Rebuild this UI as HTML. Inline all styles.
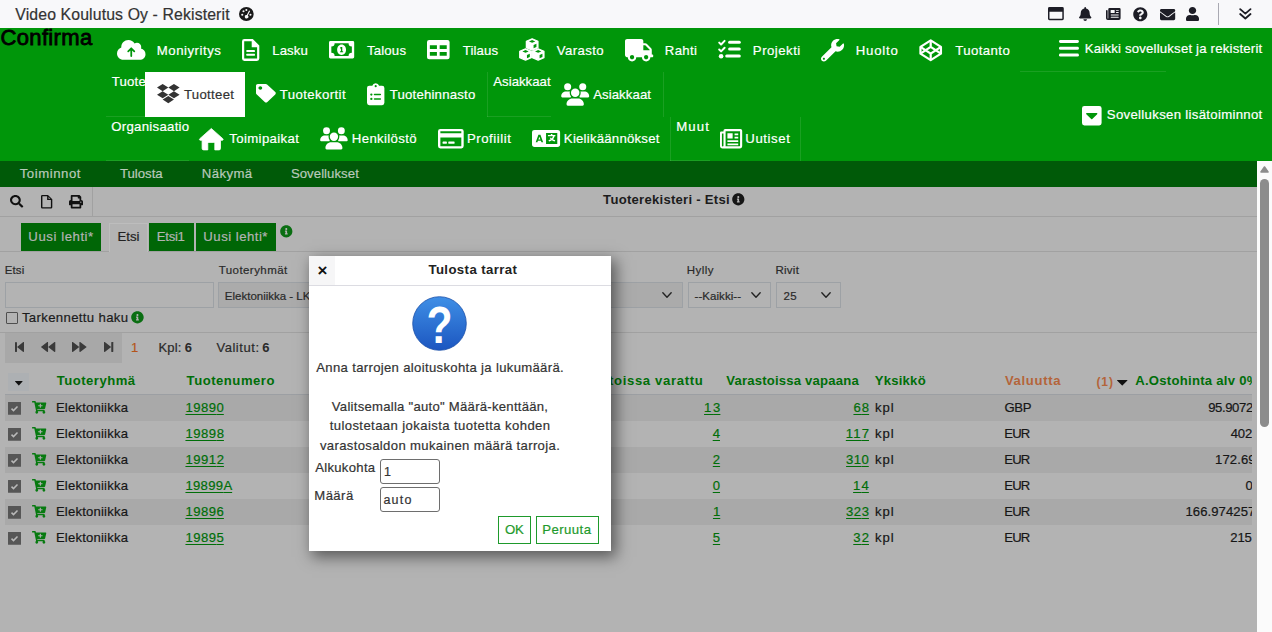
<!DOCTYPE html>
<html lang="fi"><head><meta charset="utf-8"><title>Video Koulutus Oy - Rekisterit</title>
<style>
html,body{margin:0;padding:0}
body{width:1272px;height:632px;position:relative;overflow:hidden;background:#b3b3b3;font-family:"Liberation Sans", sans-serif}
.t{position:absolute;white-space:pre;-webkit-text-stroke:.2px}
.i{position:absolute;display:block;overflow:visible}
.b{position:absolute;box-sizing:border-box}
</style></head>
<body>
<div class="b" style="left:0.0px;top:0.0px;width:1272.0px;height:28.0px;background:#f8f8fa"></div>
<div class="b" style="left:1218.0px;top:3.0px;width:1.0px;height:22.0px;background:#a9a9b2"></div>
<div class="b" style="left:0.0px;top:28.0px;width:1272.0px;height:133.0px;background:#00960a"></div>
<div class="b" style="left:1020.0px;top:70.5px;width:146.0px;height:1.0px;background:rgba(255,255,255,.10)"></div>
<div class="b" style="left:144.8px;top:71.8px;width:100.1px;height:45.1px;background:#fff"></div>
<div class="b" style="left:106.0px;top:116.0px;width:39.0px;height:1.0px;background:rgba(255,255,255,.10)"></div>
<div class="b" style="left:487.0px;top:72.0px;width:1.0px;height:45.0px;background:rgba(255,255,255,.10)"></div>
<div class="b" style="left:487.0px;top:116.0px;width:64.0px;height:1.0px;background:rgba(255,255,255,.10)"></div>
<div class="b" style="left:662.5px;top:72.0px;width:1.0px;height:45.0px;background:rgba(255,255,255,.10)"></div>
<div class="b" style="left:670.3px;top:117.0px;width:1.0px;height:44.0px;background:rgba(255,255,255,.10)"></div>
<div class="b" style="left:800.2px;top:117.0px;width:1.0px;height:44.0px;background:rgba(255,255,255,.10)"></div>
<div class="b" style="left:106.0px;top:160.0px;width:83.0px;height:1.0px;background:rgba(255,255,255,.10)"></div>
<div class="b" style="left:670.3px;top:160.0px;width:39.7px;height:1.0px;background:rgba(255,255,255,.10)"></div>
<div class="b" style="left:0.0px;top:161.0px;width:1257.0px;height:26.0px;background:#005a08"></div>
<div class="b" style="left:1257.0px;top:161.0px;width:15.0px;height:471.0px;background:#fbfbfb"></div>
<div class="b" style="left:1260.0px;top:178.7px;width:9.0px;height:248.3px;background:#8c8c8c;border-radius:4.5px"></div>
<svg class="i" style="left:1260px;top:165.800px;width:9px;height:7px" viewBox="0 0 9 7"><path d="M4.500 1L8 6H1z" fill="#8c8c8c" stroke="#8c8c8c" stroke-width="1.600" stroke-linejoin="round"/></svg>
<div class="b" style="left:92.0px;top:187.0px;width:1.0px;height:29.0px;background:#a1a1a1"></div>
<div class="b" style="left:0.0px;top:216.0px;width:1257.0px;height:1.0px;background:#a1a1a1"></div>
<div class="b" style="left:0.0px;top:251.0px;width:1257.0px;height:1.0px;background:#a1a1a1"></div>
<div class="b" style="left:0.0px;top:332.0px;width:1257.0px;height:1.0px;background:#a1a1a1"></div>
<div class="b" style="left:20.9px;top:223.0px;width:80.1px;height:28.0px;background:#006606"></div>
<div class="b" style="left:109.3px;top:222.5px;width:38.6px;height:29.5px;background:#b3b3b3;border:1px solid #bdbdbd;border-bottom:none"></div>
<div class="b" style="left:149.2px;top:223.0px;width:44.5px;height:28.0px;background:#006606"></div>
<div class="b" style="left:196.0px;top:223.0px;width:80.1px;height:28.0px;background:#006606"></div>
<div class="b" style="left:5.0px;top:282.0px;width:208.7px;height:26.0px;border:1px solid #9da1a5;background:#b3b3b3"></div>
<div class="b" style="left:218.3px;top:282.0px;width:464.7px;height:26.0px;border:1px solid #9da1a5;background:#ababab"></div>
<div class="b" style="left:688.4px;top:282.0px;width:82.6px;height:26.0px;border:1px solid #9da1a5;background:#b3b3b3"></div>
<div class="b" style="left:776.1px;top:282.0px;width:65.2px;height:26.0px;border:1px solid #9da1a5;background:#b3b3b3"></div>
<div class="b" style="left:5.6px;top:311.8px;width:12.0px;height:12.0px;border:1px solid #4f4f4f;background:#b3b3b3;border-radius:1px"></div>
<div class="b" style="left:5.0px;top:333.4px;width:117.0px;height:29.3px;background:#a8a8a8"></div>
<div class="b" style="left:8.3px;top:372.6px;width:20.6px;height:18.0px;background:#adb0b3"></div>
<div class="b" style="left:5.0px;top:394.0px;width:1247.0px;height:1.0px;background:#9c9fa3"></div>
<div class="b" style="left:5.0px;top:395.0px;width:1252.0px;height:26.0px;background:#a9a9a9"></div>
<div class="b" style="left:5.0px;top:447.0px;width:1252.0px;height:26.0px;background:#a9a9a9"></div>
<div class="b" style="left:5.0px;top:499.0px;width:1252.0px;height:26.0px;background:#a9a9a9"></div>
<span class="t" style="left:15.33px;top:6.63px;font-size:15.8px;line-height:15.8px;color:#333;letter-spacing:0.130px;">Video Koulutus Oy - Rekisterit</span>
<span class="t" style="left:0.52px;top:27.38px;font-size:22px;line-height:22px;color:#000;letter-spacing:0.341px;-webkit-text-stroke:.8px #000;">Confirma</span>
<span class="t" style="left:156.76px;top:43.83px;font-size:13.2px;line-height:13.2px;color:#fff;letter-spacing:0.529px;">Moniyritys</span>
<span class="t" style="left:272.27px;top:43.83px;font-size:13.2px;line-height:13.2px;color:#fff;letter-spacing:0.086px;">Lasku</span>
<span class="t" style="left:366.88px;top:43.83px;font-size:13.2px;line-height:13.2px;color:#fff;letter-spacing:0.202px;">Talous</span>
<span class="t" style="left:462.74px;top:43.83px;font-size:13.2px;line-height:13.2px;color:#fff;letter-spacing:0.127px;">Tilaus</span>
<span class="t" style="left:556.80px;top:43.83px;font-size:13.2px;line-height:13.2px;color:#fff;letter-spacing:0.405px;">Varasto</span>
<span class="t" style="left:664.87px;top:43.83px;font-size:13.2px;line-height:13.2px;color:#fff;letter-spacing:0.316px;">Rahti</span>
<span class="t" style="left:752.87px;top:43.83px;font-size:13.2px;line-height:13.2px;color:#fff;letter-spacing:0.492px;">Projekti</span>
<span class="t" style="left:855.76px;top:43.83px;font-size:13.2px;line-height:13.2px;color:#fff;letter-spacing:0.771px;">Huolto</span>
<span class="t" style="left:955.27px;top:43.83px;font-size:13.2px;line-height:13.2px;color:#fff;letter-spacing:0.422px;">Tuotanto</span>
<span class="t" style="left:1084.76px;top:41.83px;font-size:13.2px;line-height:13.2px;color:#fff;letter-spacing:0.191px;">Kaikki sovellukset ja rekisterit</span>
<span class="t" style="left:1106.85px;top:107.83px;font-size:13.2px;line-height:13.2px;color:#fff;letter-spacing:0.305px;">Sovelluksen lisätoiminnot</span>
<span class="t" style="left:111.75px;top:74.83px;font-size:13.2px;line-height:13.2px;color:#fff;letter-spacing:0.190px;">Tuote</span>
<span class="t" style="left:183.88px;top:87.83px;font-size:13.2px;line-height:13.2px;color:#333;letter-spacing:0.318px;">Tuotteet</span>
<span class="t" style="left:279.76px;top:87.83px;font-size:13.2px;line-height:13.2px;color:#fff;letter-spacing:0.402px;">Tuotekortit</span>
<span class="t" style="left:389.64px;top:87.83px;font-size:13.2px;line-height:13.2px;color:#fff;letter-spacing:0.213px;">Tuotehinnasto</span>
<span class="t" style="left:493.27px;top:74.83px;font-size:13.2px;line-height:13.2px;color:#fff;letter-spacing:0.019px;">Asiakkaat</span>
<span class="t" style="left:593.14px;top:87.83px;font-size:13.2px;line-height:13.2px;color:#fff;letter-spacing:0.086px;">Asiakkaat</span>
<span class="t" style="left:111.28px;top:119.83px;font-size:13.2px;line-height:13.2px;color:#fff;letter-spacing:0.281px;">Organisaatio</span>
<span class="t" style="left:229.27px;top:131.83px;font-size:13.2px;line-height:13.2px;color:#fff;letter-spacing:0.372px;">Toimipaikat</span>
<span class="t" style="left:351.87px;top:131.83px;font-size:13.2px;line-height:13.2px;color:#fff;letter-spacing:0.349px;">Henkilöstö</span>
<span class="t" style="left:466.88px;top:131.83px;font-size:13.2px;line-height:13.2px;color:#fff;letter-spacing:0.552px;">Profiilit</span>
<span class="t" style="left:563.87px;top:131.83px;font-size:13.2px;line-height:13.2px;color:#fff;letter-spacing:0.224px;">Kielikäännökset</span>
<span class="t" style="left:676.27px;top:119.83px;font-size:13.2px;line-height:13.2px;color:#fff;letter-spacing:1.108px;">Muut</span>
<span class="t" style="left:745.37px;top:131.83px;font-size:13.2px;line-height:13.2px;color:#fff;letter-spacing:0.570px;">Uutiset</span>
<span class="t" style="left:19.74px;top:166.83px;font-size:13.2px;line-height:13.2px;color:#b9c9ba;letter-spacing:0.543px;">Toiminnot</span>
<span class="t" style="left:119.88px;top:166.83px;font-size:13.2px;line-height:13.2px;color:#b9c9ba;letter-spacing:0.008px;">Tulosta</span>
<span class="t" style="left:201.76px;top:166.83px;font-size:13.2px;line-height:13.2px;color:#b9c9ba;letter-spacing:0.401px;">Näkymä</span>
<span class="t" style="left:290.88px;top:166.83px;font-size:13.2px;line-height:13.2px;color:#b9c9ba;letter-spacing:0.049px;">Sovellukset</span>
<span class="t" style="left:603.10px;top:192.91px;font-size:13.1px;line-height:13.1px;color:#1c1c1c;letter-spacing:0.260px;font-weight:700;-webkit-text-stroke:0;">Tuoterekisteri - Etsi</span>
<span class="t" style="left:28.36px;top:229.83px;font-size:13.2px;line-height:13.2px;color:#b3b3b3;letter-spacing:0.550px;">Uusi lehti*</span>
<span class="t" style="left:117.47px;top:229.83px;font-size:13.2px;line-height:13.2px;color:#222;letter-spacing:0.005px;">Etsi</span>
<span class="t" style="left:156.87px;top:229.83px;font-size:13.2px;line-height:13.2px;color:#b3b3b3;letter-spacing:-0.333px;">Etsi1</span>
<span class="t" style="left:203.37px;top:229.83px;font-size:13.2px;line-height:13.2px;color:#b3b3b3;letter-spacing:0.477px;">Uusi lehti*</span>
<span class="t" style="left:4.78px;top:265.27px;font-size:11.5px;line-height:11.5px;color:#2a2a2a;letter-spacing:0.101px;">Etsi</span>
<span class="t" style="left:218.66px;top:265.27px;font-size:11.5px;line-height:11.5px;color:#2a2a2a;letter-spacing:0.447px;">Tuoteryhmät</span>
<span class="t" style="left:686.78px;top:265.27px;font-size:11.5px;line-height:11.5px;color:#2a2a2a;letter-spacing:0.433px;">Hylly</span>
<span class="t" style="left:775.38px;top:265.27px;font-size:11.5px;line-height:11.5px;color:#2a2a2a;letter-spacing:0.291px;">Rivit</span>
<span class="t" style="left:224.87px;top:291.27px;font-size:11.5px;line-height:11.5px;color:#2a2a2a;letter-spacing:-0.006px;">Elektoniikka - LKV</span>
<span class="t" style="left:694.52px;top:291.27px;font-size:11.5px;line-height:11.5px;color:#2a2a2a;letter-spacing:0.059px;">--Kaikki--</span>
<span class="t" style="left:783.54px;top:291.27px;font-size:11.5px;line-height:11.5px;color:#2a2a2a;letter-spacing:0.296px;">25</span>
<span class="t" style="left:21.88px;top:310.83px;font-size:13.2px;line-height:13.2px;color:#1c1c1c;letter-spacing:0.335px;">Tarkennettu haku</span>
<span class="t" style="left:130.99px;top:341.00px;font-size:13px;line-height:13px;color:#b4541a;letter-spacing:0.000px;">1</span>
<span class="t" style="left:158.43px;top:341.00px;font-size:13px;line-height:13px;color:#2a2a2a;letter-spacing:0.187px;">Kpl:</span>
<span class="t" style="left:184.80px;top:341.00px;font-size:13px;line-height:13px;color:#2a2a2a;letter-spacing:0.000px;font-weight:700;-webkit-text-stroke:0;">6</span>
<span class="t" style="left:216.40px;top:341.00px;font-size:13px;line-height:13px;color:#2a2a2a;letter-spacing:0.551px;">Valitut:</span>
<span class="t" style="left:262.13px;top:341.00px;font-size:13px;line-height:13px;color:#2a2a2a;letter-spacing:0.000px;font-weight:700;-webkit-text-stroke:0;">6</span>
<span class="t" style="left:56.71px;top:373.91px;font-size:13.1px;line-height:13.1px;color:#006e08;letter-spacing:0.492px;font-weight:700;-webkit-text-stroke:0;">Tuoteryhmä</span>
<span class="t" style="left:186.62px;top:373.91px;font-size:13.1px;line-height:13.1px;color:#006e08;letter-spacing:0.516px;font-weight:700;-webkit-text-stroke:0;">Tuotenumero</span>
<span class="t" style="left:570.82px;top:373.91px;font-size:13.1px;line-height:13.1px;color:#006e08;letter-spacing:0.653px;font-weight:700;-webkit-text-stroke:0;">Varastoissa varattu</span>
<span class="t" style="left:726.26px;top:373.91px;font-size:13.1px;line-height:13.1px;color:#006e08;letter-spacing:0.201px;font-weight:700;-webkit-text-stroke:0;">Varastoissa vapaana</span>
<span class="t" style="left:874.71px;top:373.91px;font-size:13.1px;line-height:13.1px;color:#006e08;letter-spacing:0.238px;font-weight:700;-webkit-text-stroke:0;">Yksikkö</span>
<span class="t" style="left:1004.92px;top:373.91px;font-size:13.1px;line-height:13.1px;color:#b4643a;letter-spacing:0.678px;font-weight:700;-webkit-text-stroke:0;">Valuutta</span>
<span class="t" style="left:1096.42px;top:375.84px;font-size:12px;line-height:12px;color:#b4643a;letter-spacing:0.924px;font-weight:700;-webkit-text-stroke:0;">(1)</span>
<span class="t" style="left:1135.21px;top:373.91px;font-size:13.1px;line-height:13.1px;color:#006e08;letter-spacing:0.266px;font-weight:700;-webkit-text-stroke:0;">A.Ostohinta alv 0%</span>
<span class="t" style="left:55.88px;top:400.91px;font-size:13.1px;line-height:13.1px;color:#161616;letter-spacing:0.197px;">Elektoniikka</span>
<span class="t" style="left:185.45px;top:400.91px;font-size:13.1px;line-height:13.1px;color:#006e08;letter-spacing:0.485px;text-decoration:underline;text-decoration-thickness:1px;text-underline-offset:1.500px;">1989<span style="letter-spacing:0">0</span></span>
<span class="t" style="left:704.06px;top:400.91px;font-size:13.1px;line-height:13.1px;color:#006e08;letter-spacing:1.757px;text-decoration:underline;text-decoration-thickness:1px;text-underline-offset:1.500px;">1<span style="letter-spacing:0">3</span></span>
<span class="t" style="left:853.44px;top:400.91px;font-size:13.1px;line-height:13.1px;color:#006e08;letter-spacing:1.120px;text-decoration:underline;text-decoration-thickness:1px;text-underline-offset:1.500px;">6<span style="letter-spacing:0">8</span></span>
<span class="t" style="left:874.94px;top:400.91px;font-size:13.1px;line-height:13.1px;color:#161616;letter-spacing:1.039px;">kpl</span>
<span class="t" style="left:1004.51px;top:400.91px;font-size:13.1px;line-height:13.1px;color:#161616;letter-spacing:-0.349px;">GBP</span>
<span class="t" style="left:55.88px;top:426.91px;font-size:13.1px;line-height:13.1px;color:#161616;letter-spacing:0.197px;">Elektoniikka</span>
<span class="t" style="left:185.45px;top:426.91px;font-size:13.1px;line-height:13.1px;color:#006e08;letter-spacing:0.512px;text-decoration:underline;text-decoration-thickness:1px;text-underline-offset:1.500px;">1989<span style="letter-spacing:0">8</span></span>
<span class="t" style="left:712.70px;top:426.91px;font-size:13.1px;line-height:13.1px;color:#006e08;letter-spacing:0.000px;text-decoration:underline;text-decoration-thickness:1px;text-underline-offset:1.500px;">4</span>
<span class="t" style="left:845.82px;top:426.91px;font-size:13.1px;line-height:13.1px;color:#006e08;letter-spacing:1.137px;text-decoration:underline;text-decoration-thickness:1px;text-underline-offset:1.500px;">11<span style="letter-spacing:0">7</span></span>
<span class="t" style="left:874.94px;top:426.91px;font-size:13.1px;line-height:13.1px;color:#161616;letter-spacing:1.039px;">kpl</span>
<span class="t" style="left:1004.18px;top:426.91px;font-size:13.1px;line-height:13.1px;color:#161616;letter-spacing:-0.761px;">EUR</span>
<span class="t" style="left:55.88px;top:452.91px;font-size:13.1px;line-height:13.1px;color:#161616;letter-spacing:0.197px;">Elektoniikka</span>
<span class="t" style="left:185.45px;top:452.91px;font-size:13.1px;line-height:13.1px;color:#006e08;letter-spacing:0.515px;text-decoration:underline;text-decoration-thickness:1px;text-underline-offset:1.500px;">1991<span style="letter-spacing:0">2</span></span>
<span class="t" style="left:712.79px;top:452.91px;font-size:13.1px;line-height:13.1px;color:#006e08;letter-spacing:0.000px;text-decoration:underline;text-decoration-thickness:1px;text-underline-offset:1.500px;">2</span>
<span class="t" style="left:846.07px;top:452.91px;font-size:13.1px;line-height:13.1px;color:#006e08;letter-spacing:0.414px;text-decoration:underline;text-decoration-thickness:1px;text-underline-offset:1.500px;">31<span style="letter-spacing:0">0</span></span>
<span class="t" style="left:874.94px;top:452.91px;font-size:13.1px;line-height:13.1px;color:#161616;letter-spacing:1.039px;">kpl</span>
<span class="t" style="left:1004.18px;top:452.91px;font-size:13.1px;line-height:13.1px;color:#161616;letter-spacing:-0.761px;">EUR</span>
<span class="t" style="left:55.88px;top:478.91px;font-size:13.1px;line-height:13.1px;color:#161616;letter-spacing:0.197px;">Elektoniikka</span>
<span class="t" style="left:185.45px;top:478.91px;font-size:13.1px;line-height:13.1px;color:#006e08;letter-spacing:0.311px;text-decoration:underline;text-decoration-thickness:1px;text-underline-offset:1.500px;">19899<span style="letter-spacing:0">A</span></span>
<span class="t" style="left:712.76px;top:478.91px;font-size:13.1px;line-height:13.1px;color:#006e08;letter-spacing:0.000px;text-decoration:underline;text-decoration-thickness:1px;text-underline-offset:1.500px;">0</span>
<span class="t" style="left:853.09px;top:478.91px;font-size:13.1px;line-height:13.1px;color:#006e08;letter-spacing:1.190px;text-decoration:underline;text-decoration-thickness:1px;text-underline-offset:1.500px;">1<span style="letter-spacing:0">4</span></span>
<span class="t" style="left:1004.18px;top:478.91px;font-size:13.1px;line-height:13.1px;color:#161616;letter-spacing:-0.761px;">EUR</span>
<span class="t" style="left:55.88px;top:504.91px;font-size:13.1px;line-height:13.1px;color:#161616;letter-spacing:0.197px;">Elektoniikka</span>
<span class="t" style="left:185.45px;top:504.91px;font-size:13.1px;line-height:13.1px;color:#006e08;letter-spacing:0.503px;text-decoration:underline;text-decoration-thickness:1px;text-underline-offset:1.500px;">1989<span style="letter-spacing:0">6</span></span>
<span class="t" style="left:712.96px;top:504.91px;font-size:13.1px;line-height:13.1px;color:#006e08;letter-spacing:0.000px;text-decoration:underline;text-decoration-thickness:1px;text-underline-offset:1.500px;">1</span>
<span class="t" style="left:846.08px;top:504.91px;font-size:13.1px;line-height:13.1px;color:#006e08;letter-spacing:0.490px;text-decoration:underline;text-decoration-thickness:1px;text-underline-offset:1.500px;">32<span style="letter-spacing:0">3</span></span>
<span class="t" style="left:874.94px;top:504.91px;font-size:13.1px;line-height:13.1px;color:#161616;letter-spacing:1.039px;">kpl</span>
<span class="t" style="left:1004.18px;top:504.91px;font-size:13.1px;line-height:13.1px;color:#161616;letter-spacing:-0.761px;">EUR</span>
<span class="t" style="left:55.88px;top:530.91px;font-size:13.1px;line-height:13.1px;color:#161616;letter-spacing:0.197px;">Elektoniikka</span>
<span class="t" style="left:185.45px;top:530.91px;font-size:13.1px;line-height:13.1px;color:#006e08;letter-spacing:0.484px;text-decoration:underline;text-decoration-thickness:1px;text-underline-offset:1.500px;">1989<span style="letter-spacing:0">5</span></span>
<span class="t" style="left:712.83px;top:530.91px;font-size:13.1px;line-height:13.1px;color:#006e08;letter-spacing:0.000px;text-decoration:underline;text-decoration-thickness:1px;text-underline-offset:1.500px;">5</span>
<span class="t" style="left:853.27px;top:530.91px;font-size:13.1px;line-height:13.1px;color:#006e08;letter-spacing:1.131px;text-decoration:underline;text-decoration-thickness:1px;text-underline-offset:1.500px;">3<span style="letter-spacing:0">2</span></span>
<span class="t" style="left:874.94px;top:530.91px;font-size:13.1px;line-height:13.1px;color:#161616;letter-spacing:1.039px;">kpl</span>
<span class="t" style="left:1004.18px;top:530.91px;font-size:13.1px;line-height:13.1px;color:#161616;letter-spacing:-0.761px;">EUR</span>
<span class="t" style="left:1208.14px;top:400.91px;font-size:13.1px;line-height:13.1px;color:#161616;letter-spacing:-0.374px;">95.90727</span>
<span class="t" style="left:1230.76px;top:426.91px;font-size:13.1px;line-height:13.1px;color:#161616;letter-spacing:-0.217px;">402.5</span>
<span class="t" style="left:1215.09px;top:452.91px;font-size:13.1px;line-height:13.1px;color:#161616;letter-spacing:0.088px;">172.695</span>
<span class="t" style="left:1245.56px;top:478.91px;font-size:13.1px;line-height:13.1px;color:#161616;letter-spacing:0.373px;">0.0</span>
<span class="t" style="left:1185.42px;top:504.91px;font-size:13.1px;line-height:13.1px;color:#161616;letter-spacing:0.080px;">166.9742578</span>
<span class="t" style="left:1230.23px;top:530.91px;font-size:13.1px;line-height:13.1px;color:#161616;letter-spacing:-0.085px;">215.5</span>
<svg class="i" style="left:238.6px;top:6.7px;width:14.7px;height:14.1px;color:#1a1a1a" viewBox="0 0 14 14" preserveAspectRatio="none" fill="currentColor"><circle cx="7" cy="7" r="7"/><g fill="#f8f8fa"><circle cx="3.100" cy="7.600" r="1"/><circle cx="4.300" cy="4.300" r="1"/><circle cx="7" cy="3" r="1"/><circle cx="10.900" cy="7.600" r="1"/><path d="M9.600 3.400l1 .5-2.200 4.600a1.700 1.700 0 1 1-1-.5z"/></g></svg>
<svg class="i" style="left:1048.3px;top:7.3px;width:15.8px;height:13.2px;color:#1d1d26" viewBox="0 0 16 14" preserveAspectRatio="none" fill="currentColor"><path fill-rule="evenodd" d="M1.500 0h13A1.500 1.500 0 0 1 16 1.500v11a1.500 1.500 0 0 1-1.500 1.500h-13A1.500 1.500 0 0 1 0 12.500v-11A1.500 1.500 0 0 1 1.500 0zM1.500 5v7.300a.2.200 0 0 0 .2.200h12.600a.2.200 0 0 0 .2-.2V5z"/></svg>
<svg class="i" style="left:1079.2px;top:7.0px;width:12.4px;height:14.0px;color:#1d1d26" viewBox="0 0 448 512" preserveAspectRatio="none" fill="currentColor"><path d="M224 512c35.320 0 63.970-28.650 63.970-64H160.030c0 35.350 28.650 64 63.970 64zm215.390-149.710c-19.320-20.760-55.470-51.990-55.470-154.290 0-77.700-54.480-139.900-127.940-155.160V32c0-17.670-14.320-32-31.980-32s-31.980 14.330-31.980 32v20.840C118.560 68.100 64.080 130.300 64.080 208c0 102.300-36.150 133.530-55.470 154.290-6 6.450-8.660 14.160-8.610 21.710.11 16.400 12.980 32 32.100 32h383.800c19.120 0 32-15.600 32.100-32 .05-7.550-2.610-15.270-8.610-21.710z"/></svg>
<svg class="i" style="left:1106.2px;top:7.9px;width:14.6px;height:12.0px;color:#1d1d26" viewBox="0 0 23 19" preserveAspectRatio="none" fill="currentColor"><path d="M5.600 0h15.400A2 2 0 0 1 23 2v14.300A2.700 2.700 0 0 1 20.300 19H2.900A2.900 2.900 0 0 1 0 16.100V4.300a1.300 1.300 0 0 1 2.600 0v11.800a.5.500 0 0 0 1 0V2A2 2 0 0 1 5.600 0z"/><g fill="#f8f8fa"><rect x="7.300" y="3" width="6.400" height="5" rx=".6"/><rect x="15.600" y="3" width="4.600" height="1.500" rx=".7"/><rect x="15.600" y="6.500" width="4.600" height="1.500" rx=".7"/><rect x="7.300" y="10.300" width="12.900" height="1.500" rx=".7"/><rect x="7.300" y="13.800" width="12.900" height="1.500" rx=".7"/></g></svg>
<svg class="i" style="left:1133.2px;top:6.7px;width:14.6px;height:14.5px;color:#1d1d26" viewBox="0 0 512 512" preserveAspectRatio="none" fill="currentColor"><path d="M504 256c0 136.997-111.043 248-248 248S8 392.997 8 256C8 119.083 119.043 8 256 8s248 111.083 248 248zM262.655 90c-54.497 0-89.255 22.957-116.549 63.758-3.536 5.286-2.353 12.415 2.715 16.258l34.699 26.310c5.205 3.947 12.621 3.008 16.665-2.122 17.864-22.658 30.113-35.797 57.303-35.797 20.429 0 45.698 13.148 45.698 32.958 0 14.976-12.363 22.667-32.534 33.976C247.128 238.528 216 254.941 216 296v4c0 6.627 5.373 12 12 12h56c6.627 0 12-5.373 12-12v-1.333c0-28.462 83.186-29.647 83.186-106.667 0-58.002-60.165-102-116.531-102zM256 338c-25.365 0-46 20.635-46 46 0 25.364 20.635 46 46 46s46-20.636 46-46c0-25.365-20.635-46-46-46z"/></svg>
<svg class="i" style="left:1159.7px;top:6.5px;width:15.2px;height:15.0px;color:#1d1d26" viewBox="0 0 512 512" preserveAspectRatio="none" fill="currentColor"><path d="M502.300 190.800c3.900-3.100 9.700-.2 9.700 4.700V400c0 26.500-21.500 48-48 48H48c-26.500 0-48-21.500-48-48V195.600c0-5 5.700-7.800 9.700-4.700 22.400 17.400 52.100 39.500 154.100 113.600 21.100 15.400 56.700 47.800 92.200 47.600 35.700.3 72-32.800 92.300-47.600 102-74.100 131.600-96.300 154-113.700zM256 320c23.200.4 56.600-29.200 73.400-41.400 132.700-96.300 142.800-104.700 173.400-128.700 5.800-4.500 9.200-11.500 9.200-18.900v-19c0-26.500-21.500-48-48-48H48C21.500 64 0 85.500 0 112v19c0 7.400 3.400 14.300 9.200 18.900 30.600 23.900 40.700 32.400 173.400 128.700 16.800 12.200 50.200 41.800 73.400 41.400z"/></svg>
<svg class="i" style="left:1186.2px;top:7.0px;width:13.0px;height:14.0px;color:#1d1d26" viewBox="0 0 448 512" preserveAspectRatio="none" fill="currentColor"><path d="M224 256c70.700 0 128-57.300 128-128S294.700 0 224 0 96 57.300 96 128s57.300 128 128 128zm89.600 32h-16.700c-22.200 10.200-46.900 16-72.900 16s-50.600-5.800-72.900-16h-16.700C60.200 288 0 348.200 0 422.400V464c0 26.500 21.500 48 48 48h352c26.500 0 48-21.500 48-48v-41.600c0-74.200-60.200-134.400-134.400-134.400z"/></svg>
<svg class="i" style="left:1238.5px;top:8.2px;width:12.7px;height:11.7px;color:#1d1d26" viewBox="0 0 13 12" preserveAspectRatio="none" fill="currentColor"><path fill="none" stroke="currentColor" stroke-width="1.900" stroke-linecap="round" stroke-linejoin="round" d="M1.200 1.200l5.300 4.600 5.300-4.600M1.200 6.200l5.300 4.600 5.300-4.600"/></svg>
<svg class="i" style="left:116.5px;top:40.0px;width:28.5px;height:19.8px;color:#fff" viewBox="0 32 640 448" preserveAspectRatio="none" fill="currentColor"><path d="M144 480C64.500 480 0 415.500 0 336c0-62.800 40.200-116.200 96.200-135.900c-.1-2.700-.2-5.400-.2-8.100c0-88.400 71.600-160 160-160c59.300 0 111 32.200 138.700 80.200C409.900 102 428.300 96 448 96c53 0 96 43 96 96c0 12.200-2.300 23.800-6.400 34.600C596 238.400 640 290.100 640 352c0 70.700-57.300 128-128 128H144z"/><path d="M320 395V225M252 288l68-68 68 68" fill="none" stroke="#00960a" stroke-width="40" stroke-linecap="round" stroke-linejoin="round"/></svg>
<svg class="i" style="left:242.3px;top:39.0px;width:17.3px;height:21.9px;color:#fff" viewBox="0 0 18 22" preserveAspectRatio="none" fill="currentColor"><path d="M3 0h8.200L18 6.600V19.500a2.500 2.500 0 0 1-2.500 2.500h-13A2.500 2.500 0 0 1 0 19.500v-17A2.500 2.500 0 0 1 2.500 0zM2.300 2.300v17.400h13.400V8.200h-5.600V2.300z" fill-rule="evenodd"/><rect x="4.500" y="11" width="9" height="2.100" rx=".5"/><rect x="4.500" y="14.800" width="9" height="2.100" rx=".5"/></svg>
<svg class="i" style="left:329.0px;top:41.0px;width:25.2px;height:17.4px;color:#fff" viewBox="0 0 26 18" preserveAspectRatio="none" fill="currentColor"><path fill-rule="evenodd" d="M1.500 0h23A1.500 1.500 0 0 1 26 1.500v15a1.500 1.500 0 0 1-1.500 1.500h-23A1.500 1.500 0 0 1 0 16.500v-15A1.500 1.500 0 0 1 1.500 0zM5.800 2.400A3.400 3.400 0 0 1 2.400 5.800v6.400A3.400 3.400 0 0 1 5.800 15.600h14.400a3.400 3.400 0 0 1 3.400-3.400V5.800a3.400 3.400 0 0 1-3.400-3.400z"/><path fill-rule="evenodd" d="M13 3.600c2.700 0 4.600 2.400 4.600 5.400s-1.900 5.400-4.600 5.400S8.400 12 8.400 9s1.900-5.400 4.600-5.400zm-1.600 3.100v1.100h.9v2.700h-.9v1.100h3.200v-1.100h-.9V6.200h-1.200z"/></svg>
<svg class="i" style="left:427.4px;top:40.3px;width:22.6px;height:19.3px;color:#fff" viewBox="0 0 23 20" preserveAspectRatio="none" fill="currentColor"><path fill-rule="evenodd" d="M2.200 0h18.600A2.200 2.200 0 0 1 23 2.200v15.600a2.200 2.200 0 0 1-2.200 2.200H2.200A2.200 2.200 0 0 1 0 17.800V2.200A2.200 2.200 0 0 1 2.200 0zM2.900 5.400v4h7.200v-4zm10 0v4h7.200v-4zm-10 7v4h7.200v-4zm10 0v4h7.200v-4z"/></svg>
<svg class="i" style="left:519.3px;top:38.2px;width:25.7px;height:22.9px;color:#fff" viewBox="0 0 25.200 22.900" preserveAspectRatio="none" fill="currentColor"><path d="M12.9 0.8L18.6 3.2V9.7L12.9 12.1L7.2 9.7V3.2z" stroke="currentColor" stroke-width="1.200" stroke-linejoin="round"/><path d="M12.9 2.1l3.100 1.300-3.100 1.300-3.100-1.300zM14.3 7.0l2.800-1.200v3.300l-2.800 1.200z" fill="#00960a"/><path d="M6.4 10.8L12.1 13.2V19.7L6.4 22.1L0.7 19.7V13.2z" stroke="currentColor" stroke-width="1.200" stroke-linejoin="round"/><path d="M6.4 12.1l3.100 1.300-3.100 1.300-3.100-1.300zM7.8 17.0l2.800-1.200v3.300l-2.800 1.200z" fill="#00960a"/><path d="M18.8 10.8L24.5 13.2V19.7L18.8 22.1L13.1 19.7V13.2z" stroke="currentColor" stroke-width="1.200" stroke-linejoin="round"/><path d="M18.8 12.1l3.100 1.300-3.100 1.300-3.100-1.300zM20.2 17.0l2.800-1.200v3.300l-2.800 1.200z" fill="#00960a"/></svg>
<svg class="i" style="left:624.5px;top:38.5px;width:28.2px;height:22.4px;color:#fff" viewBox="0 0 640 512" preserveAspectRatio="none" fill="currentColor"><path d="M624 352h-16V243.900c0-12.700-5.100-24.900-14.100-33.900L494 110.100c-9-9-21.200-14.100-33.900-14.100H416V48c0-26.500-21.500-48-48-48H48C21.500 0 0 21.500 0 48v320c0 26.500 21.500 48 48 48h16c0 53 43 96 96 96s96-43 96-96h128c0 53 43 96 96 96s96-43 96-96h48c8.800 0 16-7.200 16-16v-32c0-8.800-7.200-16-16-16zM160 464c-26.500 0-48-21.500-48-48s21.500-48 48-48 48 21.500 48 48-21.500 48-48 48zm320 0c-26.500 0-48-21.500-48-48s21.500-48 48-48 48 21.500 48 48-21.500 48-48 48zm80-208H416V144h44.100l99.900 99.900V256z"/></svg>
<svg class="i" style="left:718.1px;top:40.3px;width:23.4px;height:18.8px;color:#fff" viewBox="0 0 23.400 18.800" preserveAspectRatio="none" fill="currentColor"><rect x="10.100" y=".7" width="12.700" height="3" rx="1.500"/><rect x="10.100" y="7.600" width="12.700" height="3" rx="1.500"/><rect x="7.200" y="14.600" width="15.600" height="3" rx="1.500"/><path d="M1.200 2.600l1.900 1.900L6.600 .9M1.200 9.500l1.900 1.900 3.500-3.600" fill="none" stroke="currentColor" stroke-width="2" stroke-linecap="round" stroke-linejoin="round"/><circle cx="3.100" cy="16.200" r="2.300"/></svg>
<svg class="i" style="left:820.8px;top:38.5px;width:23.1px;height:22.6px;color:#fff" viewBox="0 0 512 512" preserveAspectRatio="none" fill="currentColor"><path d="M507.730 109.100c-2.240-9.030-13.540-12.090-20.120-5.510l-74.360 74.360-67.880-11.310-11.310-67.880 74.360-74.360c6.620-6.620 3.430-17.900-5.660-20.160-47.380-11.740-99.550.91-136.580 37.930-39.640 39.640-50.550 97.100-34.050 147.200L18.740 402.760c-24.990 24.990-24.990 65.510 0 90.500 24.990 24.990 65.510 24.990 90.500 0l213.210-213.210c50.120 16.710 107.470 5.680 147.370-34.220 37.070-37.070 49.700-89.320 37.910-136.730zM64 472c-13.250 0-24-10.750-24-24 0-13.260 10.750-24 24-24s24 10.740 24 24c0 13.250-10.750 24-24 24z"/></svg>
<svg class="i" style="left:919.3px;top:38.9px;width:23.4px;height:22.5px;color:#fff" viewBox="0 0 24 24" preserveAspectRatio="none" fill="currentColor"><g fill="none" stroke="currentColor" stroke-width="2.300" stroke-linejoin="round"><path d="M12 1.500L22.500 8.300v7.400L12 22.500 1.500 15.700V8.300z"/><path d="M12 1.500v6.800M12 22.500v-6.800M1.500 8.300L12 15.700 22.500 8.300M1.500 15.700L12 8.300l10.500 7.400"/></g></svg>
<svg class="i" style="left:1059.1px;top:40.4px;width:19.9px;height:16.6px;color:#fff" viewBox="0 0 20 16.600" preserveAspectRatio="none" fill="currentColor"><rect x="0" y="0" width="20" height="3" rx="1.400"/><rect x="0" y="6.800" width="20" height="3" rx="1.400"/><rect x="0" y="13.600" width="20" height="3" rx="1.400"/></svg>
<svg class="i" style="left:1082.1px;top:106.0px;width:19.6px;height:19.4px;color:#fff" viewBox="0 0 20 20" preserveAspectRatio="none" fill="currentColor"><path fill-rule="evenodd" d="M2.400 0h15.200A2.400 2.400 0 0 1 20 2.400v15.200a2.400 2.400 0 0 1-2.400 2.400H2.400A2.400 2.400 0 0 1 0 17.600V2.400A2.400 2.400 0 0 1 2.400 0zM4.900 7.300c-.6 0-.9.700-.5 1.100l5 5.100c.3.300.8.300 1.100 0l5-5.100c.4-.4.100-1.100-.5-1.100z"/></svg>
<svg class="i" style="left:156.6px;top:83.9px;width:22.6px;height:18.9px;color:#333" viewBox="0 0 24 20" preserveAspectRatio="none" fill="currentColor"><path d="M6 0l6 3.800-6 3.800-6-3.800zM18 0l6 3.800-6 3.800-6-3.800zM0 11.400l6-3.800 6 3.800-6 3.800zM18 7.600l6 3.800-6 3.800-6-3.800zM6 16.500l6-3.800 6 3.800-6 3.800z"/></svg>
<svg class="i" style="left:255.5px;top:84.4px;width:19.8px;height:18.4px;color:#fff" viewBox="0 0 512 512" preserveAspectRatio="none" fill="currentColor"><path d="M0 252.118V48C0 21.490 21.490 0 48 0h204.118a48 48 0 0 1 33.941 14.059l211.882 211.882c18.745 18.745 18.745 49.137 0 67.882L293.823 497.941c-18.745 18.745-49.137 18.745-67.882 0L14.059 286.059A48 48 0 0 1 0 252.118zM112 64c-26.510 0-48 21.490-48 48s21.490 48 48 48 48-21.490 48-48-21.490-48-48-48z"/></svg>
<svg class="i" style="left:367.4px;top:82.6px;width:17.4px;height:22.2px;color:#fff" viewBox="0 0 18 23" preserveAspectRatio="none" fill="currentColor"><path fill-rule="evenodd" d="M2.400 2.900h3.100a3.600 3.600 0 0 1 7 0h3.100A2.400 2.400 0 0 1 18 5.300v15.300a2.400 2.400 0 0 1-2.400 2.400H2.400A2.400 2.400 0 0 1 0 20.600V5.300A2.400 2.400 0 0 1 2.400 2.900zM9 2.200a1.100 1.100 0 1 0 0 2.200 1.100 1.100 0 0 0 0-2.200zM4.500 10.800a1.200 1.200 0 1 0 0 2.400 1.200 1.200 0 0 0 0-2.400zm3.300.4a.8.800 0 0 0 0 1.600h6a.8.800 0 0 0 0-1.600zM4.500 15.300a1.200 1.200 0 1 0 0 2.400 1.200 1.200 0 0 0 0-2.400zm3.300.4a.8.800 0 0 0 0 1.600h6a.8.800 0 0 0 0-1.600z"/></svg>
<svg class="i" style="left:561.0px;top:82.6px;width:28.2px;height:22.7px;color:#fff" viewBox="0 0 28 22.400" preserveAspectRatio="none" fill="currentColor"><circle cx="6.600" cy="3.700" r="3.500"/><circle cx="21.600" cy="3.700" r="3.500"/><path d="M.2 13.200C.2 10.400 2.400 8.500 5 8.500H8.200C9.500 8.500 10.600 9 11.400 9.800L9.500 14.200H1.200A1 1 0 0 1 .2 13.200zM28 13.200C28 10.400 25.800 8.500 23.200 8.500H20C18.700 8.500 17.600 9 16.800 9.800L18.700 14.200H27A1 1 0 0 0 28 13.200z"/><circle cx="14.100" cy="9.700" r="5.500" fill="#00960a"/><circle cx="14.100" cy="9.700" r="4.200"/><path d="M5.500 21C5.500 17.700 8.200 15.300 11.300 15.300H16.900C20 15.300 22.700 17.700 22.700 21A1.300 1.300 0 0 1 21.400 22.400H6.800A1.300 1.300 0 0 1 5.500 21z"/></svg>
<svg class="i" style="left:199.4px;top:127.9px;width:24.6px;height:21.9px;color:#fff" viewBox="0 0 24.600 21.900" preserveAspectRatio="none" fill="currentColor"><path d="M12.300 .500L23.800 10.700a.9.900 0 0 1-.6 1.600H21.500V20.400a1.500 1.500 0 0 1-1.500 1.500H15.800V15.400a1 1 0 0 0-1-1H9.800a1 1 0 0 0-1 1v6.500H4.600a1.500 1.500 0 0 1-1.500-1.500V12.300H1.400a.9.900 0 0 1-.6-1.600z" stroke="currentColor" stroke-width=".8" stroke-linejoin="round"/></svg>
<svg class="i" style="left:320.1px;top:127.4px;width:27.7px;height:22.4px;color:#fff" viewBox="0 0 28 22.400" preserveAspectRatio="none" fill="currentColor"><circle cx="6.600" cy="3.700" r="3.500"/><circle cx="21.600" cy="3.700" r="3.500"/><path d="M.2 13.200C.2 10.400 2.400 8.500 5 8.500H8.200C9.500 8.500 10.600 9 11.400 9.800L9.500 14.200H1.200A1 1 0 0 1 .2 13.200zM28 13.200C28 10.400 25.800 8.500 23.200 8.500H20C18.700 8.500 17.600 9 16.800 9.800L18.700 14.200H27A1 1 0 0 0 28 13.200z"/><circle cx="14.100" cy="9.700" r="5.500" fill="#00960a"/><circle cx="14.100" cy="9.700" r="4.200"/><path d="M5.500 21C5.500 17.700 8.200 15.300 11.300 15.300H16.900C20 15.300 22.700 17.700 22.700 21A1.300 1.300 0 0 1 21.400 22.400H6.800A1.300 1.300 0 0 1 5.500 21z"/></svg>
<svg class="i" style="left:438.2px;top:129.2px;width:25.7px;height:19.4px;color:#fff" viewBox="0 0 26 20" preserveAspectRatio="none" fill="currentColor"><path fill-rule="evenodd" d="M2.400 0h21.200A2.400 2.400 0 0 1 26 2.400v15.200a2.400 2.400 0 0 1-2.400 2.400H2.400A2.400 2.400 0 0 1 0 17.600V2.400A2.400 2.400 0 0 1 2.400 0zM2.400 2.300v2.200h21.200V2.300zM2.400 8.800v8.900h21.200V8.800z"/><rect x="4.600" y="13" width="4.400" height="2.300" rx=".5"/><rect x="10.400" y="13" width="6.400" height="2.300" rx=".5"/></svg>
<svg class="i" style="left:532.1px;top:130.0px;width:28.1px;height:17.0px;color:#fff" viewBox="0 0 28 18" preserveAspectRatio="none" fill="currentColor"><path fill-rule="evenodd" d="M2.600 0h22.800A2.600 2.600 0 0 1 28 2.600v12.800a2.600 2.600 0 0 1-2.600 2.600H2.600A2.600 2.600 0 0 1 0 15.400V2.600A2.600 2.600 0 0 1 2.600 0zM14 3.200v11.600h11.200V3.200zM6.400 5L3.700 13h1.700l.5-1.600h3l.5 1.600h1.700L8.400 5zm1 2.100l1 3H6.400z"/><path d="M18.800 4.300h1.500v1.100h3v1.300h-.8c-.3 1.300-.8 2.300-1.600 3.200.6.400 1.400.8 2.300 1l-.6 1.300c-1.100-.3-2-.8-2.800-1.400-.8.600-1.700 1.100-2.800 1.400l-.6-1.300c.9-.2 1.700-.6 2.300-1-.5-.5-.8-1.100-1.100-1.700h1.500c.2.300.4.500.6.800.5-.6.900-1.400 1.200-2.300h-5V5.400h2.900z"/></svg>
<svg class="i" style="left:719.7px;top:129.2px;width:22.2px;height:19.4px;color:#fff" viewBox="0 0 23 20" preserveAspectRatio="none" fill="currentColor"><path fill-rule="evenodd" d="M5.400 0h15.800A1.800 1.800 0 0 1 23 1.800v15.500A2.700 2.700 0 0 1 20.300 20H2.700A2.700 2.700 0 0 1 0 17.300V3.800a1.200 1.200 0 0 1 1.200-1.200h2.400V1.800A1.800 1.800 0 0 1 5.400 0zM2 4.600v12.700a.8.800 0 0 0 1.600 0V4.600zM5.800 2.200v15.100c0 .2 0 .3-.1.500h14.600a.5.500 0 0 0 .5-.5V2.200zM7.700 4.300v5.400h5.400V4.300zm7.400.4v1.800h3.800V4.700zm0 3.400v1.800h3.800V8.100zM7.700 11.700v1.800h11.200v-1.800zm0 3.300v1.800h11.200V15z"/></svg>
<svg class="i" style="left:10.0px;top:194.9px;width:13.3px;height:12.6px;color:#111" viewBox="0 0 512 512" preserveAspectRatio="none" fill="currentColor"><path d="M505 442.7L405.300 343c-4.500-4.500-10.600-7-17-7H372c27.600-35.300 44-79.700 44-128C416 93.100 322.900 0 208 0S0 93.100 0 208s93.100 208 208 208c48.300 0 92.700-16.400 128-44v16.300c0 6.400 2.500 12.500 7 17l99.700 99.700c9.400 9.400 24.600 9.400 33.900 0l28.300-28.300c9.400-9.400 9.400-24.600.1-34zM208 336c-70.700 0-128-57.200-128-128 0-70.700 57.200-128 128-128 70.700 0 128 57.200 128 128 0 70.700-57.200 128-128 128z"/></svg>
<svg class="i" style="left:40.5px;top:194.5px;width:11.3px;height:13.5px;color:#111" viewBox="0 0 12 15" preserveAspectRatio="none" fill="currentColor"><path fill-rule="evenodd" d="M1.400 0h6L12 4.600v9A1.400 1.400 0 0 1 10.600 15H1.400A1.400 1.400 0 0 1 0 13.600V1.400A1.400 1.400 0 0 1 1.400 0zM1.500 1.500v12h9V5.600H6.500V1.500zM8 2.200v2h2z"/></svg>
<svg class="i" style="left:69.1px;top:194.5px;width:14.0px;height:13.5px;color:#111" viewBox="0 0 512 512" preserveAspectRatio="none" fill="currentColor"><path d="M448 192V77.250c0-8.490-3.370-16.620-9.370-22.630L393.370 9.370c-6-6-14.140-9.370-22.630-9.370H96C78.330 0 64 14.330 64 32v160c-35.350 0-64 28.650-64 64v112c0 8.840 7.160 16 16 16h48v96c0 17.670 14.330 32 32 32h320c17.670 0 32-14.330 32-32v-96h48c8.840 0 16-7.160 16-16V256c0-35.350-28.650-64-64-64zm-64 256H128v-96h256v96zm0-224H128V64h192v48c0 8.840 7.160 16 16 16h48v96zm48 72c-13.250 0-24-10.750-24-24 0-13.260 10.750-24 24-24s24 10.740 24 24c0 13.250-10.750 24-24 24z"/></svg>
<svg class="i" style="left:732.2px;top:192.9px;width:12.6px;height:12.6px;color:#161616" viewBox="0 0 512 512" preserveAspectRatio="none" fill="currentColor"><path d="M256 8C119.043 8 8 119.083 8 256c0 136.997 111.043 248 248 248s248-111.003 248-248C504 119.083 392.957 8 256 8zm0 110c23.196 0 42 18.804 42 42s-18.804 42-42 42-42-18.804-42-42 18.804-42 42-42zm56 254c0 6.627-5.373 12-12 12h-88c-6.627 0-12-5.373-12-12v-24c0-6.627 5.373-12 12-12h12v-64h-12c-6.627 0-12-5.373-12-12v-24c0-6.627 5.373-12 12-12h64c6.627 0 12 5.373 12 12v100h12c6.627 0 12 5.373 12 12v24z"/></svg>
<svg class="i" style="left:279.8px;top:225.4px;width:12.6px;height:12.7px;color:#0a6e12" viewBox="0 0 512 512" preserveAspectRatio="none" fill="currentColor"><path d="M256 8C119.043 8 8 119.083 8 256c0 136.997 111.043 248 248 248s248-111.003 248-248C504 119.083 392.957 8 256 8zm0 110c23.196 0 42 18.804 42 42s-18.804 42-42 42-42-18.804-42-42 18.804-42 42-42zm56 254c0 6.627-5.373 12-12 12h-88c-6.627 0-12-5.373-12-12v-24c0-6.627 5.373-12 12-12h12v-64h-12c-6.627 0-12-5.373-12-12v-24c0-6.627 5.373-12 12-12h64c6.627 0 12 5.373 12 12v100h12c6.627 0 12 5.373 12 12v24z"/></svg>
<svg class="i" style="left:130.6px;top:311.2px;width:12.9px;height:12.6px;color:#0a6e12" viewBox="0 0 512 512" preserveAspectRatio="none" fill="currentColor"><path d="M256 8C119.043 8 8 119.083 8 256c0 136.997 111.043 248 248 248s248-111.003 248-248C504 119.083 392.957 8 256 8zm0 110c23.196 0 42 18.804 42 42s-18.804 42-42 42-42-18.804-42-42 18.804-42 42-42zm56 254c0 6.627-5.373 12-12 12h-88c-6.627 0-12-5.373-12-12v-24c0-6.627 5.373-12 12-12h12v-64h-12c-6.627 0-12-5.373-12-12v-24c0-6.627 5.373-12 12-12h64c6.627 0 12 5.373 12 12v100h12c6.627 0 12 5.373 12 12v24z"/></svg>
<svg class="i" style="left:15.0px;top:342.0px;width:9.0px;height:10.0px;color:#3a3a3a" viewBox="0 0 10 11" preserveAspectRatio="none" fill="currentColor"><rect x="0" y="0" width="2.200" height="11" rx=".5"/><path d="M10 .5v10c0 .4-.5.600-.8.400L2.600 5.900a.5.500 0 0 1 0-.8L9.200.1c.3-.2.800 0 .8.400z"/></svg>
<svg class="i" style="left:41.2px;top:342.0px;width:14.3px;height:10.0px;color:#3a3a3a" viewBox="0 0 15 11" preserveAspectRatio="none" fill="currentColor"><path d="M7.400.5v10c0 .4-.5.600-.8.400L.2 5.900a.5.500 0 0 1 0-.8L6.600.1c.3-.2.800 0 .8.400zM15 .5v10c0 .4-.5.600-.8.400L7.800 5.900a.5.500 0 0 1 0-.8L14.200.1c.3-.2.800 0 .8.400z"/></svg>
<svg class="i" style="left:72.4px;top:342.0px;width:14.6px;height:10.0px;color:#3a3a3a" viewBox="0 0 15 11" preserveAspectRatio="none" fill="currentColor"><path d="M0 .5v10c0 .4.500.6.800.4l6.400-5a.5.500 0 0 0 0-.8L.8.100C.5-.1 0 .1 0 .5zM7.600.5v10c0 .4.500.6.800.4l6.400-5a.5.500 0 0 0 0-.8L8.400.1c-.3-.2-.8 0-.8.400z"/></svg>
<svg class="i" style="left:104.0px;top:342.0px;width:9.3px;height:10.0px;color:#3a3a3a" viewBox="0 0 10 11" preserveAspectRatio="none" fill="currentColor"><rect x="7.800" y="0" width="2.200" height="11" rx=".5"/><path d="M0 .5v10c0 .4.500.6.800.4l6.600-5a.5.500 0 0 0 0-.8L.8.100C.5-.1 0 .1 0 .5z"/></svg>
<svg class="i" style="left:15.4px;top:380.5px;width:7.6px;height:4.5px;color:#111" viewBox="0 0 10 5" preserveAspectRatio="none" fill="currentColor"><path d="M.3 0h9.400c.3 0 .4.300.2.500L5.400 4.800a.5.500 0 0 1-.8 0L.1.500C-.1.300 0 0 .3 0z"/></svg>
<svg class="i" style="left:1116.8px;top:380.3px;width:10.5px;height:5.5px;color:#111" viewBox="0 0 10 5" preserveAspectRatio="none" fill="currentColor"><path d="M.3 0h9.400c.3 0 .4.300.2.500L5.400 4.800a.5.500 0 0 1-.8 0L.1.500C-.1.300 0 0 .3 0z"/></svg>
<svg class="i" style="left:8.0px;top:402.0px;width:13.0px;height:12.7px;color:#565656" viewBox="0 0 13 13" preserveAspectRatio="none" fill="currentColor"><rect x="0" y="0" width="13" height="13" rx=".3"/><path fill="none" stroke="#b9b9b9" stroke-width="1.500" d="M3.500 6.800l2 2 4-4.300"/></svg>
<svg class="i" style="left:32.2px;top:401.2px;width:14.3px;height:12.7px;color:#077a10" viewBox="0 0 576 512" preserveAspectRatio="none" fill="currentColor"><path d="M504.717 320H211.572l6.545 32h268.418c15.401 0 26.816 14.301 23.403 29.319l-5.517 24.276C523.112 414.668 536 433.828 536 456c0 31.202-25.519 56.444-56.824 55.994-29.823-.429-54.350-24.631-55.155-54.447-.44-16.287 6.085-31.049 16.803-41.548H231.176C241.553 426.165 248 440.326 248 456c0 31.813-26.528 57.431-58.670 55.938-28.540-1.325-51.751-24.385-53.251-52.917-1.158-22.034 10.436-41.455 28.051-51.586L93.883 64H24C10.745 64 0 53.255 0 40V24C0 10.745 10.745 0 24 0h102.529c11.401 0 21.228 8.021 23.513 19.190L159.208 64H551.990c15.401 0 26.816 14.301 23.403 29.319l-47.273 208C525.637 312.246 515.923 320 504.717 320zM408 168h-48v-40c0-8.837-7.163-16-16-16h-16c-8.837 0-16 7.163-16 16v40h-48c-8.837 0-16 7.163-16 16v16c0 8.837 7.163 16 16 16h48v40c0 8.837 7.163 16 16 16h16c8.837 0 16-7.163 16-16v-40h48c8.837 0 16-7.163 16-16v-16c0-8.837-7.163-16-16-16z"/></svg>
<svg class="i" style="left:8.0px;top:428.0px;width:13.0px;height:12.7px;color:#565656" viewBox="0 0 13 13" preserveAspectRatio="none" fill="currentColor"><rect x="0" y="0" width="13" height="13" rx=".3"/><path fill="none" stroke="#b9b9b9" stroke-width="1.500" d="M3.500 6.800l2 2 4-4.300"/></svg>
<svg class="i" style="left:32.2px;top:427.2px;width:14.3px;height:12.7px;color:#077a10" viewBox="0 0 576 512" preserveAspectRatio="none" fill="currentColor"><path d="M504.717 320H211.572l6.545 32h268.418c15.401 0 26.816 14.301 23.403 29.319l-5.517 24.276C523.112 414.668 536 433.828 536 456c0 31.202-25.519 56.444-56.824 55.994-29.823-.429-54.350-24.631-55.155-54.447-.44-16.287 6.085-31.049 16.803-41.548H231.176C241.553 426.165 248 440.326 248 456c0 31.813-26.528 57.431-58.670 55.938-28.540-1.325-51.751-24.385-53.251-52.917-1.158-22.034 10.436-41.455 28.051-51.586L93.883 64H24C10.745 64 0 53.255 0 40V24C0 10.745 10.745 0 24 0h102.529c11.401 0 21.228 8.021 23.513 19.190L159.208 64H551.990c15.401 0 26.816 14.301 23.403 29.319l-47.273 208C525.637 312.246 515.923 320 504.717 320zM408 168h-48v-40c0-8.837-7.163-16-16-16h-16c-8.837 0-16 7.163-16 16v40h-48c-8.837 0-16 7.163-16 16v16c0 8.837 7.163 16 16 16h48v40c0 8.837 7.163 16 16 16h16c8.837 0 16-7.163 16-16v-40h48c8.837 0 16-7.163 16-16v-16c0-8.837-7.163-16-16-16z"/></svg>
<svg class="i" style="left:8.0px;top:454.0px;width:13.0px;height:12.7px;color:#565656" viewBox="0 0 13 13" preserveAspectRatio="none" fill="currentColor"><rect x="0" y="0" width="13" height="13" rx=".3"/><path fill="none" stroke="#b9b9b9" stroke-width="1.500" d="M3.500 6.800l2 2 4-4.300"/></svg>
<svg class="i" style="left:32.2px;top:453.2px;width:14.3px;height:12.7px;color:#077a10" viewBox="0 0 576 512" preserveAspectRatio="none" fill="currentColor"><path d="M504.717 320H211.572l6.545 32h268.418c15.401 0 26.816 14.301 23.403 29.319l-5.517 24.276C523.112 414.668 536 433.828 536 456c0 31.202-25.519 56.444-56.824 55.994-29.823-.429-54.350-24.631-55.155-54.447-.44-16.287 6.085-31.049 16.803-41.548H231.176C241.553 426.165 248 440.326 248 456c0 31.813-26.528 57.431-58.670 55.938-28.540-1.325-51.751-24.385-53.251-52.917-1.158-22.034 10.436-41.455 28.051-51.586L93.883 64H24C10.745 64 0 53.255 0 40V24C0 10.745 10.745 0 24 0h102.529c11.401 0 21.228 8.021 23.513 19.190L159.208 64H551.990c15.401 0 26.816 14.301 23.403 29.319l-47.273 208C525.637 312.246 515.923 320 504.717 320zM408 168h-48v-40c0-8.837-7.163-16-16-16h-16c-8.837 0-16 7.163-16 16v40h-48c-8.837 0-16 7.163-16 16v16c0 8.837 7.163 16 16 16h48v40c0 8.837 7.163 16 16 16h16c8.837 0 16-7.163 16-16v-40h48c8.837 0 16-7.163 16-16v-16c0-8.837-7.163-16-16-16z"/></svg>
<svg class="i" style="left:8.0px;top:480.0px;width:13.0px;height:12.7px;color:#565656" viewBox="0 0 13 13" preserveAspectRatio="none" fill="currentColor"><rect x="0" y="0" width="13" height="13" rx=".3"/><path fill="none" stroke="#b9b9b9" stroke-width="1.500" d="M3.500 6.800l2 2 4-4.300"/></svg>
<svg class="i" style="left:32.2px;top:479.2px;width:14.3px;height:12.7px;color:#077a10" viewBox="0 0 576 512" preserveAspectRatio="none" fill="currentColor"><path d="M504.717 320H211.572l6.545 32h268.418c15.401 0 26.816 14.301 23.403 29.319l-5.517 24.276C523.112 414.668 536 433.828 536 456c0 31.202-25.519 56.444-56.824 55.994-29.823-.429-54.350-24.631-55.155-54.447-.44-16.287 6.085-31.049 16.803-41.548H231.176C241.553 426.165 248 440.326 248 456c0 31.813-26.528 57.431-58.670 55.938-28.540-1.325-51.751-24.385-53.251-52.917-1.158-22.034 10.436-41.455 28.051-51.586L93.883 64H24C10.745 64 0 53.255 0 40V24C0 10.745 10.745 0 24 0h102.529c11.401 0 21.228 8.021 23.513 19.190L159.208 64H551.990c15.401 0 26.816 14.301 23.403 29.319l-47.273 208C525.637 312.246 515.923 320 504.717 320zM408 168h-48v-40c0-8.837-7.163-16-16-16h-16c-8.837 0-16 7.163-16 16v40h-48c-8.837 0-16 7.163-16 16v16c0 8.837 7.163 16 16 16h48v40c0 8.837 7.163 16 16 16h16c8.837 0 16-7.163 16-16v-40h48c8.837 0 16-7.163 16-16v-16c0-8.837-7.163-16-16-16z"/></svg>
<svg class="i" style="left:8.0px;top:506.0px;width:13.0px;height:12.7px;color:#565656" viewBox="0 0 13 13" preserveAspectRatio="none" fill="currentColor"><rect x="0" y="0" width="13" height="13" rx=".3"/><path fill="none" stroke="#b9b9b9" stroke-width="1.500" d="M3.500 6.800l2 2 4-4.300"/></svg>
<svg class="i" style="left:32.2px;top:505.2px;width:14.3px;height:12.7px;color:#077a10" viewBox="0 0 576 512" preserveAspectRatio="none" fill="currentColor"><path d="M504.717 320H211.572l6.545 32h268.418c15.401 0 26.816 14.301 23.403 29.319l-5.517 24.276C523.112 414.668 536 433.828 536 456c0 31.202-25.519 56.444-56.824 55.994-29.823-.429-54.350-24.631-55.155-54.447-.44-16.287 6.085-31.049 16.803-41.548H231.176C241.553 426.165 248 440.326 248 456c0 31.813-26.528 57.431-58.670 55.938-28.540-1.325-51.751-24.385-53.251-52.917-1.158-22.034 10.436-41.455 28.051-51.586L93.883 64H24C10.745 64 0 53.255 0 40V24C0 10.745 10.745 0 24 0h102.529c11.401 0 21.228 8.021 23.513 19.190L159.208 64H551.990c15.401 0 26.816 14.301 23.403 29.319l-47.273 208C525.637 312.246 515.923 320 504.717 320zM408 168h-48v-40c0-8.837-7.163-16-16-16h-16c-8.837 0-16 7.163-16 16v40h-48c-8.837 0-16 7.163-16 16v16c0 8.837 7.163 16 16 16h48v40c0 8.837 7.163 16 16 16h16c8.837 0 16-7.163 16-16v-40h48c8.837 0 16-7.163 16-16v-16c0-8.837-7.163-16-16-16z"/></svg>
<svg class="i" style="left:8.0px;top:532.0px;width:13.0px;height:12.7px;color:#565656" viewBox="0 0 13 13" preserveAspectRatio="none" fill="currentColor"><rect x="0" y="0" width="13" height="13" rx=".3"/><path fill="none" stroke="#b9b9b9" stroke-width="1.500" d="M3.500 6.800l2 2 4-4.300"/></svg>
<svg class="i" style="left:32.2px;top:531.2px;width:14.3px;height:12.7px;color:#077a10" viewBox="0 0 576 512" preserveAspectRatio="none" fill="currentColor"><path d="M504.717 320H211.572l6.545 32h268.418c15.401 0 26.816 14.301 23.403 29.319l-5.517 24.276C523.112 414.668 536 433.828 536 456c0 31.202-25.519 56.444-56.824 55.994-29.823-.429-54.350-24.631-55.155-54.447-.44-16.287 6.085-31.049 16.803-41.548H231.176C241.553 426.165 248 440.326 248 456c0 31.813-26.528 57.431-58.670 55.938-28.540-1.325-51.751-24.385-53.251-52.917-1.158-22.034 10.436-41.455 28.051-51.586L93.883 64H24C10.745 64 0 53.255 0 40V24C0 10.745 10.745 0 24 0h102.529c11.401 0 21.228 8.021 23.513 19.190L159.208 64H551.990c15.401 0 26.816 14.301 23.403 29.319l-47.273 208C525.637 312.246 515.923 320 504.717 320zM408 168h-48v-40c0-8.837-7.163-16-16-16h-16c-8.837 0-16 7.163-16 16v40h-48c-8.837 0-16 7.163-16 16v16c0 8.837 7.163 16 16 16h48v40c0 8.837 7.163 16 16 16h16c8.837 0 16-7.163 16-16v-40h48c8.837 0 16-7.163 16-16v-16c0-8.837-7.163-16-16-16z"/></svg>
<svg class="i" style="left:662.1px;top:291.5px;width:10.0px;height:6.0px;color:#222" viewBox="0 0 12 7" preserveAspectRatio="none" fill="currentColor"><path fill="none" stroke="currentColor" stroke-width="1.700" stroke-linecap="round" stroke-linejoin="round" d="M1 1l5 5 5-5"/></svg>
<svg class="i" style="left:751.2px;top:291.5px;width:10.0px;height:6.0px;color:#222" viewBox="0 0 12 7" preserveAspectRatio="none" fill="currentColor"><path fill="none" stroke="currentColor" stroke-width="1.700" stroke-linecap="round" stroke-linejoin="round" d="M1 1l5 5 5-5"/></svg>
<svg class="i" style="left:820.9px;top:291.5px;width:10.0px;height:6.0px;color:#222" viewBox="0 0 12 7" preserveAspectRatio="none" fill="currentColor"><path fill="none" stroke="currentColor" stroke-width="1.700" stroke-linecap="round" stroke-linejoin="round" d="M1 1l5 5 5-5"/></svg>
<div class="b" style="left:1252px;top:366px;width:5px;height:30px;background:#b3b3b3"></div>
<div class="b" style="left:1252px;top:395.0px;width:5px;height:26px;background:#b3b3b3"></div>
<div class="b" style="left:1252px;top:421.0px;width:5px;height:26px;background:#b3b3b3"></div>
<div class="b" style="left:1252px;top:447.0px;width:5px;height:26px;background:#b3b3b3"></div>
<div class="b" style="left:1252px;top:473.0px;width:5px;height:26px;background:#b3b3b3"></div>
<div class="b" style="left:1252px;top:499.0px;width:5px;height:26px;background:#b3b3b3"></div>
<div class="b" style="left:1252px;top:525.0px;width:5px;height:26px;background:#b3b3b3"></div>
<div class="b" style="left:1257px;top:366px;width:15px;height:200px;background:#fbfbfb"></div>
<div class="b" style="left:1260px;top:366px;width:9px;height:61px;background:#8c8c8c;border-radius:0 0 4.500px 4.500px"></div>
<div class="b" style="left:309.4px;top:256.3px;width:301.5px;height:294.5px;background:#fff;box-shadow:4px 5px 14px 1px rgba(0,0,0,.5)"></div>
<div class="b" style="left:309.4px;top:256.3px;width:25.5px;height:28.4px;background:#f6f6f7"></div>
<div class="b" style="left:309.4px;top:284.7px;width:301.5px;height:1px;background:#dcdce2"></div>
<svg class="i" style="left:412px;top:295.600px;width:55px;height:55px" viewBox="0 0 55 55">
<defs><linearGradient id="qg" x1="0" y1="0" x2="0" y2="1"><stop offset="0" stop-color="#3f8fe6"/><stop offset="1" stop-color="#1c56c0"/></linearGradient></defs>
<circle cx="27.500" cy="27.500" r="26.800" fill="url(#qg)" stroke="#1a4fa8" stroke-width=".8"/>
<text transform="translate(27.500 46.700) scale(.82 1)" x="0" y="0" text-anchor="middle" font-family="Liberation Sans, sans-serif" font-weight="700" font-size="52" fill="#fff">?</text></svg>
<div class="b" style="left:380px;top:459px;width:59.700px;height:25.300px;border:1px solid #6e6e6e;border-radius:3px;background:#fff"></div>
<div class="b" style="left:380px;top:487px;width:59.700px;height:24.800px;border:1px solid #6e6e6e;border-radius:3px;background:#fff"></div>
<div class="b" style="left:498px;top:516px;width:32.900px;height:27.800px;border:1px solid #1e9a2c;background:#fff"></div>
<div class="b" style="left:536px;top:516px;width:63px;height:27.800px;border:1px solid #1e9a2c;background:#fff"></div>
<span class="t" style="left:428.45px;top:262.83px;font-size:13.2px;line-height:13.2px;color:#222;letter-spacing:0.396px;font-weight:700;-webkit-text-stroke:0;">Tulosta tarrat</span>
<span class="t" style="left:316.29px;top:360.91px;font-size:13.1px;line-height:13.1px;color:#333;letter-spacing:0.334px;">Anna tarrojen aloituskohta ja lukumäärä.</span>
<span class="t" style="left:331.80px;top:399.91px;font-size:13.1px;line-height:13.1px;color:#333;letter-spacing:0.270px;">Valitsemalla "auto" Määrä-kenttään,</span>
<span class="t" style="left:329.66px;top:418.91px;font-size:13.1px;line-height:13.1px;color:#333;letter-spacing:0.411px;">tulostetaan jokaista tuotetta kohden</span>
<span class="t" style="left:319.88px;top:438.91px;font-size:13.1px;line-height:13.1px;color:#333;letter-spacing:0.357px;">varastosaldon mukainen määrä tarroja.</span>
<span class="t" style="left:315.14px;top:460.91px;font-size:13.1px;line-height:13.1px;color:#333;letter-spacing:0.315px;">Alkukohta</span>
<span class="t" style="left:314.28px;top:488.91px;font-size:13.1px;line-height:13.1px;color:#333;letter-spacing:0.455px;">Määrä</span>
<span class="t" style="left:383.90px;top:466.42px;font-size:12.5px;line-height:12.5px;color:#333;letter-spacing:0.000px;">1</span>
<span class="t" style="left:383.49px;top:494.42px;font-size:12.5px;line-height:12.5px;color:#333;letter-spacing:1.176px;">auto</span>
<span class="t" style="left:504.98px;top:522.83px;font-size:13.2px;line-height:13.2px;color:#1e9a2c;letter-spacing:-0.335px;">OK</span>
<span class="t" style="left:542.27px;top:522.83px;font-size:13.2px;line-height:13.2px;color:#1e9a2c;letter-spacing:0.422px;">Peruuta</span>
<span class="t" style="left:317.40px;top:261.81px;font-size:17px;line-height:17px;color:#111;letter-spacing:0.000px;font-weight:700;-webkit-text-stroke:0;">×</span>
</body></html>
